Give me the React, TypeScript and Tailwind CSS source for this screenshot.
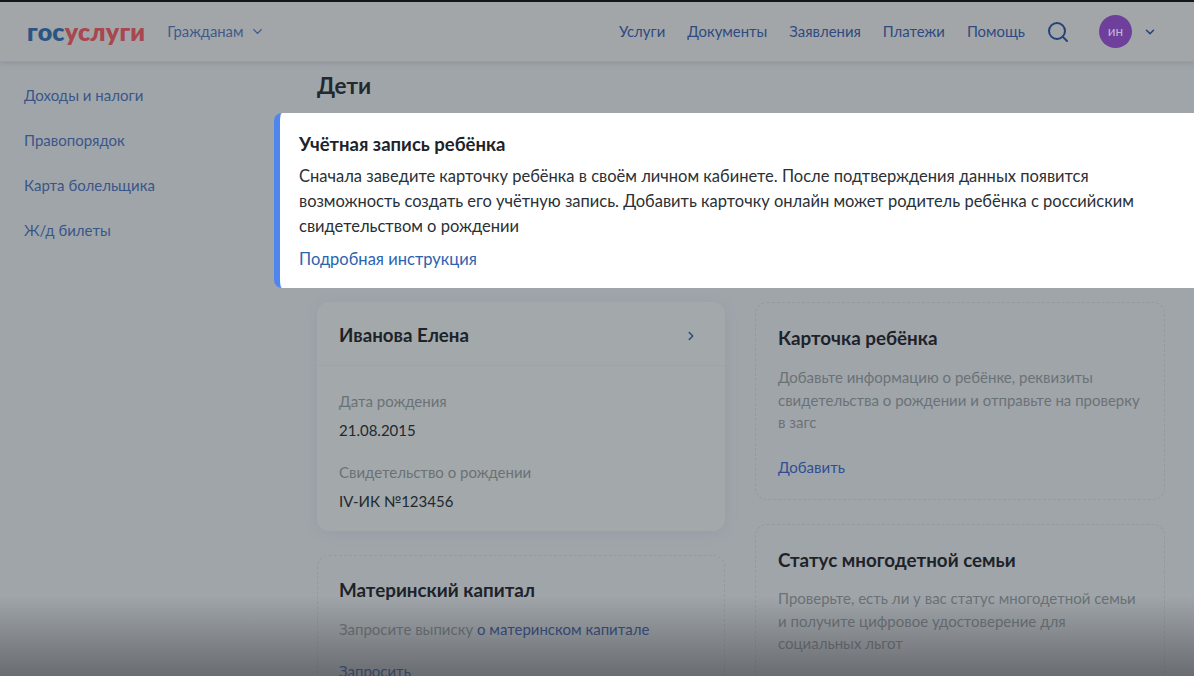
import React from 'react';
import { ChevronDown, ChevronRight, Search } from 'lucide-react';

const topLinks = ['Услуги', 'Документы', 'Заявления', 'Платежи', 'Помощь'];
const sideLinks = ['Доходы и налоги', 'Правопорядок', 'Карта болельщика', 'Ж/д билеты'];

const Field: React.FC<{ label: string; value: string }> = ({ label, value }) => (
  <div>
    <div className="text-[15px] leading-[20px] text-[#6b7276]">{label}</div>
    <div className="mt-[9px] text-[15px] leading-[20px] text-[#22292f]">{value}</div>
  </div>
);

const DashedCard: React.FC<{ className?: string; children: React.ReactNode }> = ({ className, children }) => (
  <div className={`rounded-xl border border-dashed border-[#949aa0] ${className ?? ''}`}>{children}</div>
);

export default function App() {
  return (
    <div className="relative flex h-[676px] w-[1194px] flex-col overflow-hidden bg-[#a0a5aa] font-['Lato','Noto_Sans',sans-serif]">
      <header className="flex h-[62px] shrink-0 items-center border-t-2 border-b border-t-[#14161a] border-b-[#989da6] bg-[#a2a6a9] pr-[37px] pl-[27px] shadow-[0_2px_4px_rgba(120,125,140,0.35)]">
        <div className="text-[25px] leading-none font-extrabold tracking-[0.2px]">
          <span className="text-[#2a5583]">гос</span>
          <span className="text-[#a8474f]">услуги</span>
        </div>
        <div className="ml-[22px] flex items-center gap-[7px] text-[14.8px] text-[#3f5a8a]">
          Гражданам
          <ChevronDown className="h-[15px] w-[15px]" strokeWidth={2.2} />
        </div>
        <nav className="ml-auto flex items-center gap-[22px] text-[14.9px] text-[#2f4a80]">
          {topLinks.map((l) => (
            <span key={l}>{l}</span>
          ))}
        </nav>
        <Search className="ml-[21px] h-[24px] w-[24px] text-[#24437a]" strokeWidth={2} />
        <div className="ml-[29px] flex h-[33px] w-[33px] items-center justify-center rounded-full bg-[#6f3f9c] text-[13.5px] text-[#c4b4d6]">
          ин
        </div>
        <ChevronDown className="ml-[11px] h-[14px] w-[14px] text-[#24437a]" strokeWidth={2.6} />
      </header>

      <div className="flex min-h-0 flex-1">
        <aside className="flex w-[317px] shrink-0 flex-col gap-[25px] pt-[23px] pl-[24px] text-[15px] leading-[20px] text-[#3a5688]">
          {sideLinks.map((l) => (
            <span key={l}>{l}</span>
          ))}
        </aside>

        <main className="w-[848px] shrink-0">
          <h1 className="mt-[9px] text-[22.5px] leading-[30px] font-bold text-[#22292f]">Дети</h1>

          <div className="mt-[201px] grid grid-cols-[408px_410px] gap-x-[30px]">
            <div className="flex flex-col gap-[24px]">
              <div className="h-[229px] rounded-xl bg-[#a3a8aa] shadow-[0_2px_12px_rgba(140,148,165,0.45)]">
                <div className="flex h-[64px] items-center justify-between border-b border-[#9ea3a5] pt-[4px] pr-[27px] pl-[22px]">
                  <span className="text-[18.7px] font-bold text-[#1d2329]">Иванова Елена</span>
                  <ChevronRight className="h-[14px] w-[14px] text-[#2f4a80]" strokeWidth={2.6} />
                </div>
                <div className="flex flex-col gap-[22px] px-[22px] pt-[25px]">
                  <Field label="Дата рождения" value="21.08.2015" />
                  <Field label="Свидетельство о рождении" value="IV-ИК №123456" />
                </div>
              </div>

              <DashedCard className="h-[200px] px-[21px] pt-[20px]">
                <div className="text-[18.8px] leading-[28px] font-bold text-[#1d2329]">Материнский капитал</div>
                <div className="mt-[14px] text-[15px] leading-[22px] text-[#6b7276]">
                  Запросите выписку <span className="text-[#2f4a80]">о материнском капитале</span>
                </div>
                <div className="mt-[20px] text-[15px] leading-[22px] text-[#2f4a80]">Запросить</div>
              </DashedCard>
            </div>

            <div className="flex flex-col gap-[24px]">
              <DashedCard className="h-[198px] px-[22px] pt-[21px]">
                <div className="text-[18.8px] leading-[28px] font-bold text-[#1d2329]">Карточка ребёнка</div>
                <div className="mt-[14px] text-[15px] leading-[22.5px] text-[#6b7276]">
                  Добавьте информацию о ребёнке, реквизиты
                  <br />
                  свидетельства о рождении и отправьте на проверку
                  <br />в загс
                </div>
                <div className="mt-[22px] text-[15px] leading-[22px] text-[#2f4f95]">Добавить</div>
              </DashedCard>

              <DashedCard className="h-[220px] px-[22px] pt-[21px]">
                <div className="text-[18.8px] leading-[28px] font-bold text-[#1d2329]">Статус многодетной семьи</div>
                <div className="mt-[13px] text-[15px] leading-[22.5px] text-[#6b7276]">
                  Проверьте, есть ли у вас статус многодетной семьи
                  <br />и получите цифровое удостоверение для
                  <br />
                  социальных льгот
                </div>
              </DashedCard>
            </div>
          </div>
        </main>
      </div>

      {/* затемнение снизу */}
      <div className="pointer-events-none absolute right-0 bottom-0 left-0 h-[80px] bg-gradient-to-b from-[rgba(60,62,66,0)] to-[rgba(60,62,66,0.55)]" />

      {/* подсказка поверх страницы */}
      <div className="absolute top-[113px] right-0 left-[274px] h-[175px] rounded-l-lg border-l-[6px] border-l-[#4f86ee] bg-white pt-[19px] pl-[19px]">
        <div className="text-[18.5px] leading-[24px] font-bold text-[#1d2329]">Учётная запись ребёнка</div>
        <div className="mt-[8px] text-[16.5px] leading-[25px] text-[#2a3036]">
          Сначала заведите карточку ребёнка в своём личном кабинете. После подтверждения данных появится
          <br />
          возможность создать его учётную запись. Добавить карточку онлайн может родитель ребёнка с российским
          <br />
          свидетельством о рождении
        </div>
        <div className="mt-[8px] text-[16.5px] leading-[25px] text-[#2b63ae]">Подробная инструкция</div>
      </div>
    </div>
  );
}
